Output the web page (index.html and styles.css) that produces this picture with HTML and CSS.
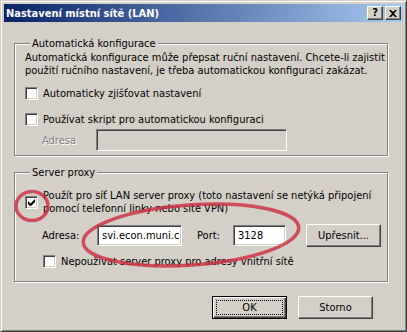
FILE: index.html
```html
<!DOCTYPE html>
<html lang="cs">
<head>
<meta charset="utf-8">
<title>Nastavení místní sítě (LAN)</title>
<link rel="stylesheet" href="styles.css">
</head>
<body>
<div class="window">
  <div class="titlebar">
    <span class="title">Nastavení místní sítě (LAN)</span>
    <div class="caption-btns">
      <span class="cbtn help">?</span>
      <span class="cbtn close"><svg width="8" height="7" viewBox="0 0 8 7"><path d="M0 0h2l2 2 2-2h2L5 3.5 8 7H6L4 5 2 7H0l3-3.5z" fill="#000"/></svg></span>
    </div>
  </div>
  <div class="content">
    <fieldset class="group g1">
      <legend>Automatická konfigurace</legend>
      <p class="desc">Automatická konfigurace může přepsat ruční nastavení. Chcete-li zajistit<br>použití ručního nastavení, je třeba automatickou konfiguraci zakázat.</p>
      <div class="check c1"><span class="box"></span><span>Automaticky zjišťovat nastavení</span></div>
      <div class="check c2"><span class="box"></span><span>Používat skript pro automatickou konfiguraci</span></div>
      <div class="script-row"><span class="lbl disabled">Adresa</span><span class="field off"></span></div>
    </fieldset>
    <fieldset class="group g2">
      <legend>Server proxy</legend>
      <div class="check two"><span class="box"><svg width="7" height="7" viewBox="0 0 7 7"><path d="M0 2v3l2 2h1l4-4V0L2.5 4.5z" fill="#000"/></svg></span><span>Použít pro síť LAN server proxy (toto nastavení se netýká připojení<br>pomocí telefonní linky nebo sítě VPN)</span></div>
      <div class="proxy-row">
        <span class="lbl">Adresa:</span>
        <span class="field addr">svi.econ.muni.c</span>
        <span class="lbl port">Port:</span>
        <span class="field portf">3128</span>
        <span class="btn adv">Upřesnit...</span>
      </div>
      <div class="check c3"><span class="box"></span><span>Nepoužívat server proxy pro adresy vnitřní sítě</span></div>
    </fieldset>
    <div class="actions">
      <span class="btn default"><span class="focus">OK</span></span>
      <span class="btn">Storno</span>
    </div>
  </div>
  <svg class="marks" width="407" height="332" viewBox="0 0 407 332">
    <ellipse cx="31" cy="205" rx="16" ry="14.5" />
    <ellipse cx="190" cy="234" rx="108" ry="30" transform="rotate(-4 190 234)" />
  </svg>
</div>
</body>
</html>
```

FILE: styles.css
```css
* { box-sizing: border-box; }
html, body { margin: 0; padding: 0; background: #d4d0c8; }
body {
  font-family: "DejaVu Sans Condensed", "DejaVu Sans", sans-serif;
  font-stretch: condensed;
  font-size: 11px;
  line-height: 13px;
  color: #000;
}
.window {
  position: relative;
  width: 407px;
  height: 332px;
  background: #d4d0c8;
  border: 1px solid;
  border-color: #d4d0c8 #404040 #404040 #d4d0c8;
  box-shadow: inset 1px 1px 0 #fff, inset -1px -1px 0 #808080;
  padding: 3px;
}
.titlebar {
  height: 18px;
  display: flex;
  align-items: center;
  justify-content: space-between;
  padding: 0 2px 0 2px;
  background: linear-gradient(to right, #0a246a, #a6caf0);
}
.title {
  color: #fff;
  font-weight: bold;
  font-size: 11px;
}
.caption-btns { display: flex; gap: 2px; }
.cbtn {
  width: 16px;
  height: 14px;
  display: flex;
  align-items: center;
  justify-content: center;
  background: #d4d0c8;
  border: 1px solid;
  border-color: #fff #404040 #404040 #fff;
  box-shadow: inset -1px -1px 0 #808080;
  font-weight: bold;
  font-size: 11px;
  line-height: 12px;
}
.content {
  padding: 15px 0 0 10px;
}
.group {
  margin: 0;
  width: 374px;
  border: 1px solid #808080;
  box-shadow: inset 1px 1px 0 #fff, 1px 1px 0 #fff;
  padding: 0 0 0 10px;
}
.group legend {
  padding: 0 2px;
  margin-left: 5px;
  line-height: 13px;
  background: #d4d0c8;
}
.g1 { height: 119px; padding-top: 1px; }
.g2 { height: 116px; margin-top: 10px; padding-top: 10px; }
.desc { margin: 0; }
.check {
  display: flex;
  align-items: center;
  gap: 5px;
  height: 13px;
}
.check.two { height: 26px; }
.c1 { margin-top: 10px; }
.c2 { margin-top: 13px; }
.box {
  flex: none;
  width: 13px;
  height: 13px;
  display: flex;
  align-items: center;
  justify-content: center;
  background: #fff;
  border: 1px solid;
  border-color: #808080 #fff #fff #808080;
  box-shadow: inset 1px 1px 0 #404040, inset -1px -1px 0 #d4d0c8;
}
.script-row {
  display: flex;
  align-items: center;
  margin-top: 3px;
  padding-left: 17px;
}
.script-row .lbl { width: 54px; }
.disabled { color: #808080; text-shadow: 1px 1px 0 #fff; }
.field {
  height: 21px;
  display: flex;
  align-items: center;
  padding-left: 4px;
  background: #fff;
  border: 1px solid;
  border-color: #808080 #fff #fff #808080;
  box-shadow: inset 1px 1px 0 #404040, inset -1px -1px 0 #d4d0c8;
}
.field.off { width: 191px; height: 22px; background: #d4d0c8; }
.proxy-row {
  display: flex;
  align-items: center;
  margin-top: 9px;
  padding-left: 17px;
}
.proxy-row .lbl { flex: none; width: 55px; }
.field.addr { flex: none; width: 85px; }
.proxy-row .lbl.port { width: 36px; margin-left: 15px; }
.field.portf { flex: none; width: 53px; }
.btn {
  display: flex;
  align-items: center;
  justify-content: center;
  width: 75px;
  height: 23px;
  background: #d4d0c8;
  border: 1px solid;
  border-color: #fff #404040 #404040 #fff;
  box-shadow: inset -1px -1px 0 #808080;
}
.btn.adv { flex: none; margin-left: 20px; }
.c3 { margin-top: 8px; padding-left: 18px; }
.actions {
  display: flex;
  gap: 11px;
  margin: 14px 0 0 198px;
}
.btn.default {
  border: 1px solid #000;
  box-shadow: inset 1px 1px 0 #fff, inset -1px -1px 0 #404040, inset -2px -2px 0 #808080;
  padding: 3px;
}
.focus {
  width: 100%;
  height: 100%;
  display: flex;
  align-items: center;
  justify-content: center;
  border: 1px dotted #000;
}
.marks {
  position: absolute;
  left: 0;
  top: 0;
  pointer-events: none;
}
.marks ellipse {
  fill: none;
  stroke: #cc2f3f;
  stroke-width: 3.5;
  stroke-opacity: 0.82;
}
```
